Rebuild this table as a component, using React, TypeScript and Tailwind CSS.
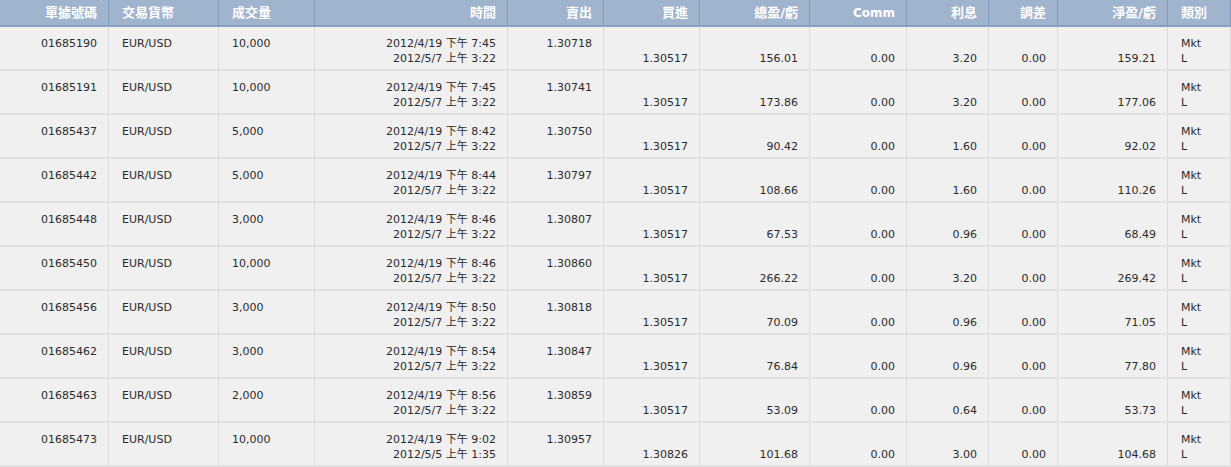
import React from 'react';

type Trade = {
  id: string;
  pair: string;
  size: string;
  open: string;
  close: string;
  sell: string;
  buy: string;
  gross: string;
  comm: string;
  interest: string;
  adj: string;
  net: string;
};

const trades: Trade[] = [
  { id: '01685190', pair: 'EUR/USD', size: '10,000', open: '2012/4/19 下午 7:45', close: '2012/5/7 上午 3:22', sell: '1.30718', buy: '1.30517', gross: '156.01', comm: '0.00', interest: '3.20', adj: '0.00', net: '159.21' },
  { id: '01685191', pair: 'EUR/USD', size: '10,000', open: '2012/4/19 下午 7:45', close: '2012/5/7 上午 3:22', sell: '1.30741', buy: '1.30517', gross: '173.86', comm: '0.00', interest: '3.20', adj: '0.00', net: '177.06' },
  { id: '01685437', pair: 'EUR/USD', size: '5,000', open: '2012/4/19 下午 8:42', close: '2012/5/7 上午 3:22', sell: '1.30750', buy: '1.30517', gross: '90.42', comm: '0.00', interest: '1.60', adj: '0.00', net: '92.02' },
  { id: '01685442', pair: 'EUR/USD', size: '5,000', open: '2012/4/19 下午 8:44', close: '2012/5/7 上午 3:22', sell: '1.30797', buy: '1.30517', gross: '108.66', comm: '0.00', interest: '1.60', adj: '0.00', net: '110.26' },
  { id: '01685448', pair: 'EUR/USD', size: '3,000', open: '2012/4/19 下午 8:46', close: '2012/5/7 上午 3:22', sell: '1.30807', buy: '1.30517', gross: '67.53', comm: '0.00', interest: '0.96', adj: '0.00', net: '68.49' },
  { id: '01685450', pair: 'EUR/USD', size: '10,000', open: '2012/4/19 下午 8:46', close: '2012/5/7 上午 3:22', sell: '1.30860', buy: '1.30517', gross: '266.22', comm: '0.00', interest: '3.20', adj: '0.00', net: '269.42' },
  { id: '01685456', pair: 'EUR/USD', size: '3,000', open: '2012/4/19 下午 8:50', close: '2012/5/7 上午 3:22', sell: '1.30818', buy: '1.30517', gross: '70.09', comm: '0.00', interest: '0.96', adj: '0.00', net: '71.05' },
  { id: '01685462', pair: 'EUR/USD', size: '3,000', open: '2012/4/19 下午 8:54', close: '2012/5/7 上午 3:22', sell: '1.30847', buy: '1.30517', gross: '76.84', comm: '0.00', interest: '0.96', adj: '0.00', net: '77.80' },
  { id: '01685463', pair: 'EUR/USD', size: '2,000', open: '2012/4/19 下午 8:56', close: '2012/5/7 上午 3:22', sell: '1.30859', buy: '1.30517', gross: '53.09', comm: '0.00', interest: '0.64', adj: '0.00', net: '53.73' },
  { id: '01685473', pair: 'EUR/USD', size: '10,000', open: '2012/4/19 下午 9:02', close: '2012/5/5 上午 1:35', sell: '1.30957', buy: '1.30826', gross: '101.68', comm: '0.00', interest: '3.00', adj: '0.00', net: '104.68' },
];

const cols =
  'grid grid-cols-[109px_110px_96px_193px_96px_96px_110px_97px_82px_69px_110px_63px]';

const headers: { label: string; left?: boolean; latin?: boolean }[] = [
  { label: '單據號碼' },
  { label: '交易貨幣', left: true },
  { label: '成交量', left: true },
  { label: '時間' },
  { label: '賣出' },
  { label: '買進' },
  { label: '總盈/虧' },
  { label: 'Comm', latin: true },
  { label: '利息' },
  { label: '調差' },
  { label: '淨盈/虧' },
  { label: '類別', left: true },
];

const Cell = ({
  top,
  bottom,
  left,
}: {
  top?: string;
  bottom?: string;
  left?: boolean;
}) => (
  <div
    className={`h-full border-r border-[#dcdcdc] pt-[9px] leading-[15px] whitespace-nowrap ${
      left ? 'pl-[13px] text-left' : 'pr-[11px] text-right'
    }`}
  >
    <div>{top ?? '\u00a0'}</div>
    <div>{bottom ?? '\u00a0'}</div>
  </div>
);

export default function App() {
  return (
    <div className="w-[1231px] h-[467px] overflow-hidden bg-[#f0f0f0] font-['DejaVu_Sans','Noto_Sans_CJK_TC',sans-serif] text-[11px] text-[#2b2b2b]">
      {/* Header */}
      <div className={`${cols} h-[27px] bg-[#a0b4ce] border-b-2 border-[#8aa0bf]`}>
        {headers.map((h) => (
          <div
            key={h.label}
            className={`flex items-center border-r border-[#8299b9] font-bold text-white whitespace-nowrap ${
              h.latin ? 'text-[12px]' : 'text-[13px]'
            } ${h.left ? 'pl-[13px] justify-start' : 'pr-[11px] justify-end'}`}
          >
            {h.label}
          </div>
        ))}
      </div>

      {/* Rows */}
      {trades.map((t) => (
        <div
          key={t.id}
          className={`${cols} h-[44px] border-b-2 border-[#e2e2e2]`}
        >
          <Cell top={t.id} />
          <Cell top={t.pair} left />
          <Cell top={t.size} left />
          <Cell top={t.open} bottom={t.close} />
          <Cell top={t.sell} />
          <Cell bottom={t.buy} />
          <Cell bottom={t.gross} />
          <Cell bottom={t.comm} />
          <Cell bottom={t.interest} />
          <Cell bottom={t.adj} />
          <Cell bottom={t.net} />
          <Cell top="Mkt" bottom="L" left />
        </div>
      ))}
    </div>
  );
}
